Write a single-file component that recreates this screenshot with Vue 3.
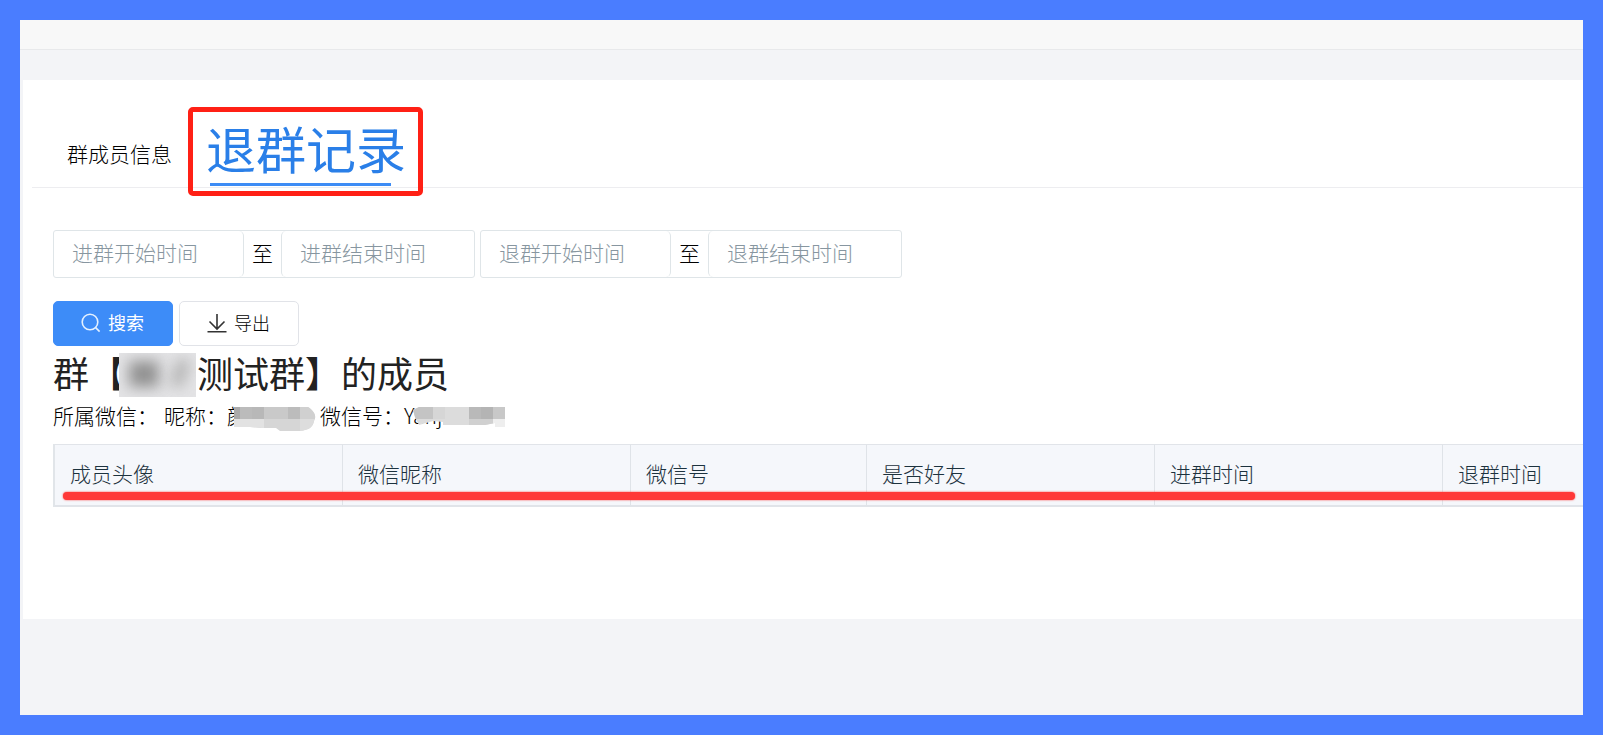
<script setup>
import { ref } from 'vue'

const tabs = ['群成员信息', '退群记录']
const active = ref(1)
const ranges = [
  { start: '进群开始时间', end: '进群结束时间' },
  { start: '退群开始时间', end: '退群结束时间' },
]
const columns = ['成员头像', '微信昵称', '微信号', '是否好友', '进群时间', '退群时间']
</script>

<template>
  <div class="frame">
    <div class="page">
      <header class="topbar"></header>
      <main class="card">
        <nav class="tabs" role="tablist">
          <button
            v-for="(tab, i) in tabs"
            :key="tab"
            type="button"
            role="tab"
            class="tab"
            :class="{ active: active === i }"
            :aria-selected="active === i"
            @click="active = i"
          ><span class="tab-text">{{ tab }}</span></button>
        </nav>

        <section class="content">
          <form class="filters" @submit.prevent>
            <div v-for="r in ranges" :key="r.start" class="range">
              <input class="date start" type="text" :placeholder="r.start" :aria-label="r.start" />
              <span class="to">至</span>
              <input class="date end" type="text" :placeholder="r.end" :aria-label="r.end" />
            </div>
          </form>

          <div class="actions">
            <button type="button" class="btn primary">
              <svg class="icon" viewBox="0 0 20 20" aria-hidden="true">
                <circle cx="9" cy="9" r="7.8" />
                <path d="M14.6 14.6 L18.6 18.6" />
              </svg>
              <span>搜索</span>
            </button>
            <button type="button" class="btn">
              <svg class="icon" viewBox="0 0 20 20" aria-hidden="true">
                <path d="M10 1 V15.5 M2.5 8.5 L10 16 L17.5 8.5 M0.5 18.8 H19.5" />
              </svg>
              <span>导出</span>
            </button>
          </div>

          <h1 class="title">群【<span class="masked-group"><span class="mask"><i class="blob one"></i><i class="blob two"></i></span></span>测试群】的成员</h1>

          <p class="owner">
            <span class="label">所属微信：</span>
            <span>昵称：</span>
            <span class="masked nick">颜
              <svg class="mosaic" width="82" height="24" viewBox="0 0 82 24" aria-hidden="true">
                <clipPath id="nick-shape"><path d="M0 0 H74 C80 4 83 9 80 14 C79 20 75 23 66 24 H46 L42 21 H28 L16 20 H0 Z" /></clipPath>
                <g clip-path="url(#nick-shape)">
                  <rect width="82" height="24" fill="#d6d6d6" />
                  <rect width="6" height="12" fill="#aaa" /><rect x="6" width="12" height="12" fill="#bbb" />
                  <rect x="18" width="12" height="12" fill="#b8b8b8" /><rect x="30" width="24" height="12" fill="#c9c9c9" />
                  <rect x="54" width="12" height="12" fill="#bcbcbc" /><rect x="66" width="16" height="12" fill="#d0d0d0" />
                  <rect y="12" width="30" height="12" fill="#e2e2e2" /><rect x="66" y="12" width="16" height="12" fill="#ddd" />
                </g>
              </svg>
            </span>
            <span>微信号：</span>
            <span class="masked wxid">Yanj
              <svg class="mosaic" width="92" height="20" viewBox="0 0 92 20" aria-hidden="true">
                <clipPath id="id-shape"><path d="M0 3 L6 0 H92 V20 H82 V16 L72 18 H30 V15 L20 14 L6 18 L2 10 Z" /></clipPath>
                <g clip-path="url(#id-shape)">
                  <rect width="92" height="20" fill="#dcdcdc" />
                  <rect width="20" height="12" fill="#c4c4c4" /><rect x="20" width="12" height="12" fill="#d6d6d6" />
                  <rect x="56" width="12" height="12" fill="#b9b9b9" /><rect x="68" width="12" height="12" fill="#b4b4b4" />
                  <rect x="80" width="12" height="12" fill="#c8c8c8" /><rect x="56" y="12" width="24" height="8" fill="#d0d0d0" />
                  <rect x="80" y="12" width="12" height="8" fill="#eee" />
                </g>
              </svg>
            </span>
          </p>

          <div class="table-wrap">
            <table>
              <colgroup>
                <col v-for="(c, i) in columns" :key="c" :class="'col-' + i" />
              </colgroup>
              <thead>
                <tr><th v-for="c in columns" :key="c" scope="col">{{ c }}</th></tr>
              </thead>
            </table>
            <div class="marker"></div>
          </div>
        </section>
      </main>
    </div>
  </div>
</template>

<style>
body {
  margin: 0;
}
</style>

<style scoped>
.frame {
  box-sizing: border-box;
  min-height: 100vh;
  padding: 20px;
  display: flex;
  background: #4a7dff;
  font-family: "Noto Sans CJK SC", sans-serif;
  font-weight: 300;
  font-size: 21px;
  color: #000;
}
.page {
  flex: 1;
  min-width: 0;
  background: #f3f4f7;
}
.topbar {
  height: 29px;
  background: #f8f8f8;
  border-bottom: 1px solid #e8e9eb;
}
.card {
  margin: 30px 0 0 3px;
  padding-bottom: 112px;
  background: #fff;
}
button,
input {
  font: inherit;
  color: inherit;
}
.tabs {
  display: flex;
  align-items: flex-end;
  gap: 16px;
  box-sizing: border-box;
  height: 108px;
  margin-left: 9px;
  padding-left: 35px;
  border-bottom: 1px solid #ededf0;
}
.tab {
  padding: 0 0 18px;
  border: 0;
  background: none;
  line-height: 32px;
  cursor: pointer;
}
.tab.active {
  position: relative;
  box-sizing: border-box;
  width: 235px;
  height: 89px;
  margin-bottom: -9px;
  padding: 0 13px 9px;
  border: 5px solid #ff2015;
  border-radius: 5px;
  font-size: 50px;
  font-weight: 400;
  line-height: 70px;
  color: #2a7fe8;
  text-align: left;
  white-space: nowrap;
}
.tab.active::after {
  content: "";
  position: absolute;
  left: 17px;
  right: 27px;
  bottom: 5px;
  height: 3px;
  background: #3d8cf5;
}
.content {
  padding: 42px 0 0 30px;
}
.filters {
  display: flex;
  gap: 5px;
}
.range {
  display: flex;
  box-sizing: border-box;
  width: 422px;
  height: 48px;
  border: 1px solid #dfe5e8;
  border-radius: 3px;
}
.date {
  flex: 1;
  min-width: 0;
  box-sizing: border-box;
  padding: 0 18px 4px;
  border: 0;
  border-radius: 5px;
  background: transparent;
  outline: 0;
}
.date::placeholder {
  color: #8796a0;
  opacity: 1;
}
.date.start {
  flex: 0 0 190px;
  border-right: 1px solid #dfe5e8;
}
.date.end {
  border-left: 1px solid #dfe5e8;
}
.to {
  width: 37px;
  text-align: center;
  line-height: 42px;
}
.actions {
  display: flex;
  gap: 6px;
  margin-top: 23px;
}
.btn {
  display: flex;
  align-items: center;
  justify-content: center;
  gap: 7px;
  box-sizing: border-box;
  width: 120px;
  height: 45px;
  padding: 0 1px 0 0;
  border: 1px solid #e1e3e8;
  border-radius: 5px;
  background: #fff;
  font-size: 18px;
  cursor: pointer;
}
.btn span {
  padding-bottom: 4px;
}
.btn.primary {
  border-color: #3d8cf8;
  background: #3d8cf8;
  color: #fff;
  font-weight: 400;
}
.icon {
  width: 20px;
  height: 20px;
  padding-bottom: 2px;
  fill: none;
  stroke: #333;
  stroke-width: 1.6;
}
.primary .icon {
  stroke: #e3f0ff;
}
.title {
  margin: 4px 0 0;
  font-size: 36px;
  font-weight: 400;
  line-height: 44px;
  color: #222;
}
.masked-group {
  display: inline-block;
  position: relative;
  width: 72px;
  height: 36px;
}
.mask {
  position: absolute;
  left: -6px;
  bottom: -9px;
  width: 77px;
  height: 44px;
  overflow: hidden;
  background: #e3e3e5;
}
.blob {
  position: absolute;
  filter: blur(7px);
}
.blob.one {
  left: 10px;
  top: 8px;
  width: 30px;
  height: 26px;
  background: #929292;
}
.blob.two {
  left: 54px;
  top: 6px;
  width: 14px;
  height: 28px;
  background: #b6b6b6;
  transform: rotate(20deg);
}
.owner {
  display: flex;
  margin: 5px 0 0;
  line-height: 32px;
}
.label {
  margin-right: 6px;
}
.masked {
  position: relative;
  white-space: nowrap;
}
.nick {
  width: 93px;
}
.wxid {
  width: 100px;
}
.mosaic {
  position: absolute;
  left: 7px;
  top: 8px;
}
.wxid .mosaic {
  left: 9px;
}
.table-wrap {
  position: relative;
  margin-top: 13px;
  overflow: hidden;
}
table {
  width: 100%;
  table-layout: fixed;
  border-collapse: separate;
  border-spacing: 0;
  border-left: 2px solid #e1e5e9;
}
.col-0,
.col-1,
.col-3,
.col-4 {
  width: 288px;
}
.col-2 {
  width: 236px;
}
th {
  height: 60px;
  box-sizing: border-box;
  padding: 0 0 3px 15px;
  border-top: 1px solid #e1e4e9;
  border-bottom: 2px solid #e1e4e9;
  background: #f5f7fb;
  color: #1c323e;
  font-weight: 300;
  line-height: 57px;
  text-align: left;
  white-space: nowrap;
}
th:not(:last-child) {
  border-right: 1px solid #dfe3e8;
}
.marker {
  position: absolute;
  left: 10px;
  right: 8px;
  bottom: 7px;
  height: 8px;
  border-radius: 4px;
  background: #ff3838;
  box-shadow: 0 0 2px #ff3838;
}
</style>
